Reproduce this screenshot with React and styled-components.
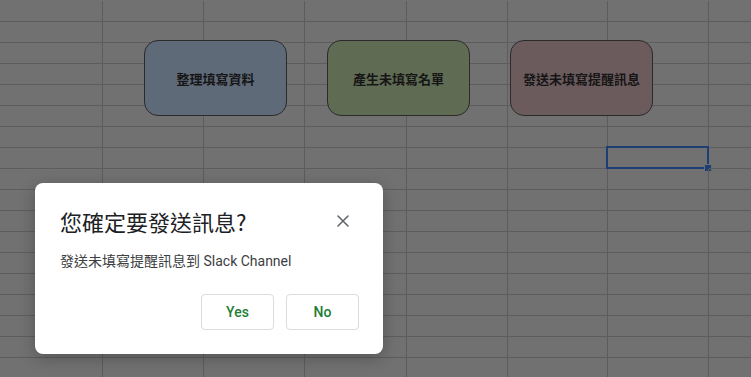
import styled, { createGlobalStyle } from "styled-components";

const GlobalStyle = createGlobalStyle`
  html, body {
    margin: 0;
    padding: 0;
    background: #717171;
    overflow: hidden;
  }
  body {
    font-family: Roboto, "Noto Sans CJK TC", sans-serif;
  }
`

const columns = [103, 101, 101, 102, 101, 100, 101, 101]
const rowCount = 18

const shapes = [
    { label: "整理填寫資料", left: 144, color: "#5f6a79" },
    { label: "產生未填寫名單", left: 327, color: "#5f6b53" },
    { label: "發送未填寫提醒訊息", left: 510, color: "#6c5b5d" },
]

const App = () => {
    return (
        <Page>
            <GlobalStyle />

            <Sheet>
                <Grid $cols={columns}>
                    {Array.from({ length: rowCount }).map((_, r) =>
                        columns.map((_, c) => (
                            <Cell key={`${r}-${c}`} $selected={r === 7 && c === 6} />
                        ))
                    )}
                </Grid>

                {shapes.map(s => (
                    <Shape key={s.label} $left={s.left} $color={s.color}>{s.label}</Shape>
                ))}
            </Sheet>

            <Dialog>
                <Header>
                    <Title>您確定要發送訊息?</Title>
                    <Close aria-label="close">
                        <svg width="12" height="12" viewBox="0 0 12 12">
                            <path d="M1 1 L11 11 M11 1 L1 11" stroke="#5f6368" strokeWidth="1.5" strokeLinecap="round" />
                        </svg>
                    </Close>
                </Header>
                <Message>發送未填寫提醒訊息到 Slack Channel</Message>
                <Actions>
                    <Button>Yes</Button>
                    <Button>No</Button>
                </Actions>
            </Dialog>
        </Page>
    )
}

export default App

const Page = styled.div`
    position: relative;
    width: 751px;
    height: 377px;
    overflow: hidden;
`

const Sheet = styled.div`
    position: relative;
    border-top: 1px solid #5d5d5d;
    margin-top: -1px;
`

const Grid = styled.div`
    display: grid;
    grid-template-columns: ${p => p.$cols.map(w => `${w}px`).join(" ")};
    grid-auto-rows: 21px;
    margin-top: 1px;
`

const Cell = styled.div`
    position: relative;
    box-sizing: border-box;
    border-right: 1px solid #5d5d5d;
    border-bottom: 1px solid #5d5d5d;

    ${p => p.$selected && `
        &::before {
            content: "";
            position: absolute;
            left: -2px;
            top: -2px;
            right: -1px;
            bottom: -1px;
            border: 2px solid #1d3f74;
        }
        &::after {
            content: "";
            position: absolute;
            right: -4px;
            bottom: -4px;
            width: 6px;
            height: 6px;
            background: #1d3f74;
            border: 1px solid #6f6f6f;
        }
    `}
`

const Shape = styled.div`
    position: absolute;
    top: 40px;
    left: ${p => p.$left}px;
    width: 143px;
    height: 76px;
    box-sizing: border-box;
    display: flex;
    align-items: center;
    justify-content: center;
    background: ${p => p.$color};
    border: 1px solid #2b2b2b;
    border-radius: 14px;
    font-family: "Noto Sans CJK TC", sans-serif;
    font-size: 13px;
    font-weight: 700;
    color: #161616;
`

const Dialog = styled.div`
    position: absolute;
    left: 35px;
    top: 183px;
    width: 348px;
    height: 171px;
    box-sizing: border-box;
    padding: 24px 24px 24px 25px;
    background: #ffffff;
    border-radius: 8px;
    box-shadow: 0 4px 16px rgba(0, 0, 0, 0.25);
    display: flex;
    flex-direction: column;
`

const Header = styled.div`
    display: flex;
    align-items: center;
    justify-content: space-between;
    height: 28px;
`

const Title = styled.h2`
    margin: 0;
    font-family: "Noto Sans CJK TC", sans-serif;
    font-size: 22px;
    font-weight: 400;
    line-height: 28px;
    color: #202124;
`

const Close = styled.button`
    display: flex;
    align-items: center;
    justify-content: center;
    width: 32px;
    height: 28px;
    padding: 0;
    border: none;
    background: transparent;
`

const Message = styled.p`
    margin: 16px 0 0;
    font-family: Roboto, "Noto Sans CJK TC", sans-serif;
    font-size: 14px;
    line-height: 20px;
    color: #3c4043;
`

const Actions = styled.div`
    display: flex;
    justify-content: flex-end;
    gap: 12px;
    margin-top: auto;
`

const Button = styled.button`
    width: 73px;
    height: 36px;
    box-sizing: border-box;
    border: 1px solid #dadce0;
    border-radius: 4px;
    background: #ffffff;
    font-family: Roboto, sans-serif;
    font-size: 14px;
    font-weight: 500;
    color: #1e7e34;
`
